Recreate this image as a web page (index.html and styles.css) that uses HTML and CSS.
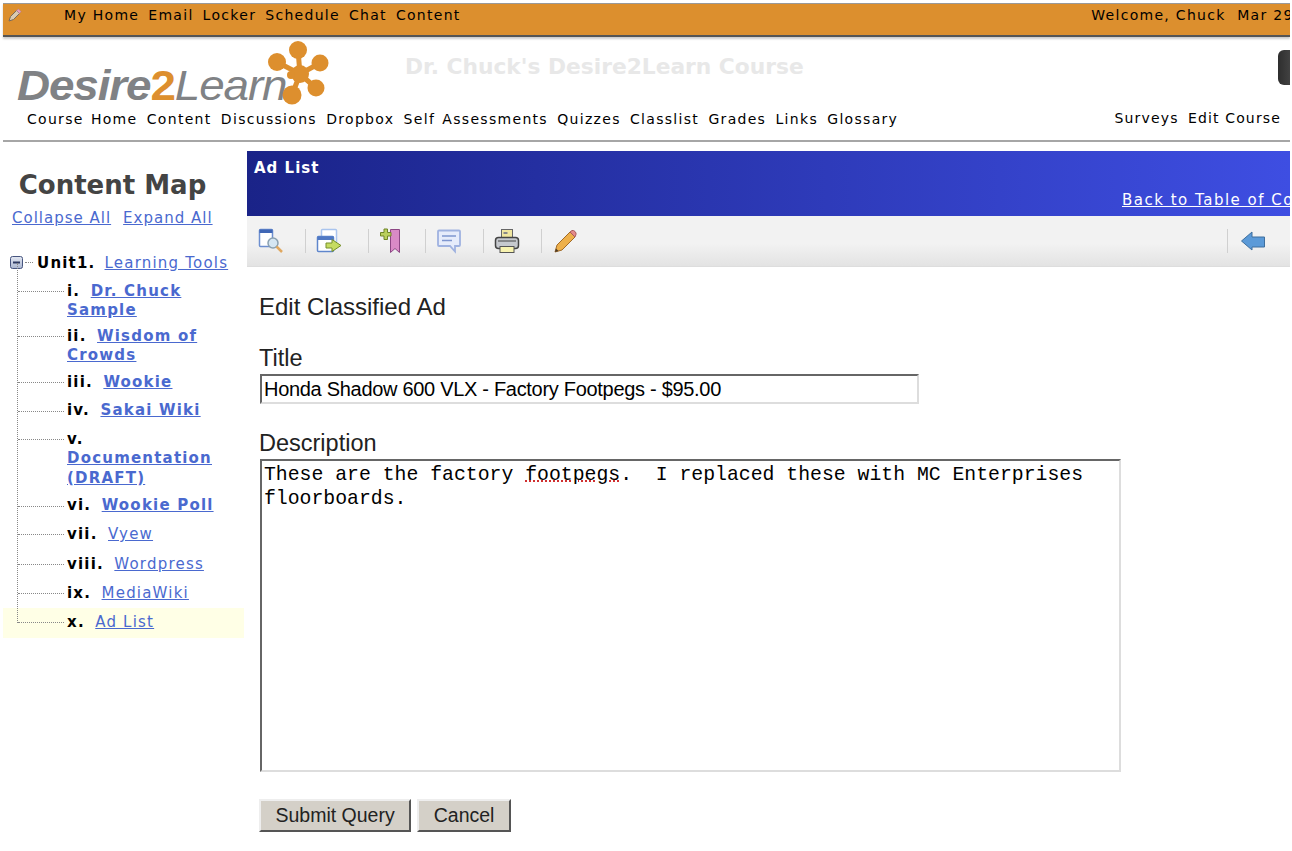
FILE: index.html
```html
<!DOCTYPE html>
<html lang="en">

<head>
    <meta charset="UTF-8">
    <meta name="viewport" content="width=device-width, initial-scale=1.0">
    <title>Edit Classified Ad</title>
    <link rel="stylesheet" href="styles.css">
</head>

<body>
    <div class="topbar">
        <svg class="topbar-icon" width="14" height="14" viewBox="0 0 14 14">
            <path d="M1 13 L2.500 8.500 L8.500 2.500 L11.500 5.500 L5.500 11.500 Z" fill="#d9c9b0" stroke="#7a6a5a"/>
            <path d="M8.500 2.500 L10.500 1 L13 3.500 L11.500 5.500 Z" fill="#e8a0c0" stroke="#a87a90" stroke-width="0.500"/>
        </svg>
        <nav class="topbar-links">
            <a>My Home</a><a>Email</a><a>Locker</a><a>Schedule</a><a>Chat</a><a>Content</a>
        </nav>
        <div class="topbar-user">Welcome, Chuck &nbsp;Mar 29, 2007</div>
    </div>

    <header class="course-header">
        <div class="brand-row">
            <div class="logo">
                <span class="logo-word"><b>Desire</b><b class="logo-two">2</b><i>Learn</i></span>
                <svg class="logo-flower" width="62" height="66" viewBox="0 0 62 66">
                    <g stroke="#dd8f2e" stroke-width="5">
                        <path d="M32 34 L30 10 M32 34 L9 22 M32 34 L52 23 M32 34 L48 48 M32 34 L24 55"/>
                    </g>
                    <g fill="#dd8f2e">
                        <circle cx="30" cy="10" r="9"/>
                        <circle cx="9" cy="22" r="9"/>
                        <circle cx="52" cy="23" r="8.500"/>
                        <circle cx="48" cy="48" r="8.500"/>
                        <circle cx="24" cy="55" r="9.500"/>
                        <circle cx="32" cy="34" r="9"/>
                        <circle cx="23" cy="35" r="4"/>
                    </g>
                </svg>
            </div>
            <div class="course-title">Dr. Chuck's Desire2Learn Course</div>
            <div class="header-badge"></div>
        </div>
        <nav class="course-nav">
            <div class="course-nav-left">
                <a>Course Home</a><a>Content</a><a>Discussions</a><a>Dropbox</a><a>Self Assessments</a><a>Quizzes</a><a>Classlist</a><a>Grades</a><a>Links</a><a>Glossary</a>
            </div>
            <div class="course-nav-right">
                <a>Surveys</a><a>Edit Course</a>
            </div>
        </nav>
    </header>

    <div class="layout">
        <aside class="sidebar">
            <h2 class="map-title">Content Map</h2>
            <div class="map-actions">
                <a href="#">Collapse All</a><a href="#">Expand All</a>
            </div>

            <div class="unit">
                <svg class="unit-toggle" width="13" height="13" viewBox="0 0 13 13">
                    <defs>
                        <linearGradient id="toggleFill" x1="0" y1="0" x2="0" y2="1">
                            <stop offset="0" stop-color="#e4e8f2"/>
                            <stop offset="1" stop-color="#a9b5d0"/>
                        </linearGradient>
                    </defs>
                    <rect x="0.500" y="0.500" width="12" height="12" rx="2" fill="url(#toggleFill)" stroke="#47557f"/>
                    <rect x="3" y="5.500" width="7" height="2" fill="#2e3a63"/>
                </svg>
                <span class="unit-dots"></span>
                <strong>Unit1.</strong>
                <a href="#">Learning Tools</a>
            </div>

            <ul class="tree">
                <li class="tree-item"><strong>i.</strong> <a class="visited" href="#">Dr. Chuck Sample</a></li>
                <li class="tree-item"><strong>ii.</strong> <a class="visited" href="#">Wisdom of Crowds</a></li>
                <li class="tree-item"><strong>iii.</strong> <a class="visited" href="#">Wookie</a></li>
                <li class="tree-item"><strong>iv.</strong> <a class="visited" href="#">Sakai Wiki</a></li>
                <li class="tree-item"><strong>v.</strong> <a class="visited" href="#">Documentation (DRAFT)</a></li>
                <li class="tree-item"><strong>vi.</strong> <a class="visited" href="#">Wookie Poll</a></li>
                <li class="tree-item plain"><strong>vii.</strong> <a href="#">Vyew</a></li>
                <li class="tree-item plain"><strong>viii.</strong> <a href="#">Wordpress</a></li>
                <li class="tree-item plain"><strong>ix.</strong> <a href="#">MediaWiki</a></li>
                <li class="tree-item plain current"><strong>x.</strong> <a href="#">Ad List</a></li>
            </ul>
        </aside>

        <main class="content">
            <div class="banner">
                <div class="banner-title">Ad List</div>
                <a class="banner-back" href="#">Back to Table of Contents</a>
            </div>

            <div class="toolbar">
                <button class="tool">
                    <svg width="26" height="26" viewBox="0 0 26 26">
                        <rect x="1.500" y="1.500" width="13" height="17" rx="1" fill="#fff" stroke="#6d8fd0" stroke-width="1.500"/>
                        <rect x="1.500" y="1.500" width="13" height="3.500" fill="#3f66b5"/>
                        <circle cx="15" cy="15" r="5" fill="#d5e6f2" stroke="#8aa0b0" stroke-width="1.500"/>
                        <path d="M18.500 18.500 L24 24" stroke="#e0a860" stroke-width="2.500"/>
                    </svg>
                </button>
                <button class="tool tool-wide">
                    <svg width="26" height="26" viewBox="0 0 26 26">
                        <rect x="5.500" y="1.500" width="15" height="13" rx="1" fill="#fff" stroke="#a9c4ee" stroke-width="1.500"/>
                        <rect x="1.500" y="8.500" width="16" height="15" rx="1" fill="#fff" stroke="#5f86cc" stroke-width="1.500"/>
                        <rect x="1.500" y="8.500" width="16" height="3.500" fill="#4f78c4"/>
                        <path d="M10 15 H16 V11.500 L25 17.500 L16 23.500 V20 H10 Z" fill="#c6dc62" stroke="#76902c"/>
                    </svg>
                </button>
                <button class="tool">
                    <svg width="26" height="26" viewBox="0 0 26 26">
                        <path d="M12.500 1.500 H21.500 V24.500 L17 20.500 L12.500 24.500 Z" fill="#d98ac6" stroke="#8c4684"/>
                        <path d="M6 1 H9.500 V4.500 H13 V8 H9.500 V11.500 H6 V8 H2.500 V4.500 H6 Z" fill="#b9cf5c" stroke="#6f8526"/>
                    </svg>
                </button>
                <button class="tool">
                    <svg width="26" height="26" viewBox="0 0 26 26">
                        <path d="M3 2.500 H23 Q24 2.500 24 3.500 V17 Q24 18 23 18 H19 V23.500 L14 18 H3 Q2 18 2 17 V3.500 Q2 2.500 3 2.500 Z" fill="#e6ecfb" stroke="#9fb2e0" stroke-width="1.800"/>
                        <path d="M6 8 H20 M6 12.500 H16" stroke="#7f96cf" stroke-width="1.500"/>
                    </svg>
                </button>
                <button class="tool">
                    <svg width="26" height="26" viewBox="0 0 26 26">
                        <rect x="7.500" y="1.500" width="11" height="9" fill="#f0e6a0" stroke="#666"/>
                        <rect x="9.500" y="4" width="4" height="2" fill="#888"/>
                        <rect x="1.500" y="9.500" width="23" height="11" rx="3" fill="#c6c9ce" stroke="#444" stroke-width="1.500"/>
                        <rect x="6" y="18.500" width="14" height="6" fill="#f8f3b0" stroke="#555"/>
                        <path d="M4 13 H22" stroke="#444"/>
                    </svg>
                </button>
                <button class="tool tool-last">
                    <svg width="26" height="26" viewBox="0 0 26 26">
                        <path d="M3 24 L5 17 L18 4 L23 9 L10 22 Z" fill="#eeb04a" stroke="#a06a28"/>
                        <path d="M18 4 L20 2.500 Q21.500 2 23 3.500 Q24.500 5 24 6.500 L23 9 Z" fill="#e58a8a" stroke="#a85c5c"/>
                        <path d="M3 24 L4 20.500 L6.500 23 Z" fill="#4a3a2a"/>
                    </svg>
                </button>
                <button class="tool-back">
                    <svg width="24" height="20" viewBox="0 0 24 20">
                        <path d="M0.500 10 L11 1 V6 H23.500 V16 H11 V19 Z" fill="#5b9ad8" stroke="#3f6f9e"/>
                    </svg>
                </button>
            </div>

            <form class="ad-form">
                <h3 class="form-heading">Edit Classified Ad</h3>
                <label class="field-label" for="title">Title</label>
                <input class="title-input" type="text" id="title" name="title" value="Honda Shadow 600 VLX - Factory Footpegs - $95.00">

                <label class="field-label description-label" for="description">Description</label>
                <div class="description-box" id="description">These are the factory <span class="misspelt">footpegs</span>.  I replaced these with MC Enterprises floorboards.</div>

                <div class="form-buttons">
                    <input class="form-button" type="button" value="Submit Query">
                    <input class="form-button" type="button" value="Cancel">
                </div>
            </form>
        </main>
    </div>
</body>

</html>
```

FILE: styles.css
```css
html,
body {
    height: 100%;
}

body {
    margin: 0;
    overflow: hidden;
    width: 1290px;
    padding-top: 3px;
    padding-left: 3px;
    box-sizing: border-box;
    background: #fff;
    font-family: "DejaVu Sans", sans-serif;
    font-size: 14px;
    color: #000;
}

a {
    color: #4a69cf;
}

/* Top bar */
.topbar {
    display: flex;
    align-items: center;
    height: 31px;
    overflow: hidden;
    background: #dc8f2e;
    border-top: 1px solid #999;
    border-bottom: 2px solid #555;
    box-shadow: 0 2px 2px #ccc;
    letter-spacing: 1.3px;
    white-space: nowrap;
}

.topbar a,
.course-nav a {
    color: #000;
}

.topbar-icon {
    flex-shrink: 0;
    margin: -10px 0 0 5px;
}

.topbar-links {
    display: flex;
    gap: 9px;
    margin-left: 42px;
    margin-top: -10px;
}

.topbar-user {
    flex-shrink: 0;
    margin-left: auto;
    margin-right: -56px;
    margin-top: -10px;
}

/* Course header */
.course-header {
    border-bottom: 2px solid #a6a6a6;
}

.brand-row {
    display: flex;
    height: 74px;
}

.logo {
    position: relative;
    width: 327px;
    flex-shrink: 0;
}

.logo-word {
    position: absolute;
    left: 14px;
    top: 25px;
    font-family: "Liberation Sans", sans-serif;
    font-size: 42px;
    font-style: italic;
    letter-spacing: -1px;
    color: #808285;
    white-space: nowrap;
    transform: scaleX(1.09);
    transform-origin: left;
}

.logo-word i {
    font-weight: normal;
}

.logo-two {
    color: #dd8f2e;
    font-style: normal;
}

.logo-flower {
    position: absolute;
    left: 265px;
    top: 3px;
}

.course-title {
    margin: 17px 0 0 75px;
    font-size: 21.75px;
    font-weight: bold;
    color: #e8e8e8;
    white-space: nowrap;
}

.header-badge {
    width: 24px;
    height: 35px;
    margin: 13px -12px 0 auto;
    background: linear-gradient(to right, #2e2e2e, #555);
    border-radius: 6px;
}

.course-nav {
    display: flex;
    justify-content: space-between;
    height: 29px;
    padding-left: 24px;
    letter-spacing: 1.3px;
    white-space: nowrap;
}

.course-nav-left,
.course-nav-right {
    display: flex;
    gap: 9.3px;
}

.course-nav-left {
    word-spacing: 1.5px;
}

.course-nav-right {
    margin-top: -1px;
    padding-right: 9px;
    letter-spacing: 1.15px;
}

/* Main layout */
.layout {
    display: flex;
    margin-top: 9px;
}

.sidebar {
    width: 244px;
    flex-shrink: 0;
}

.map-title {
    margin: 19px 0 0;
    padding-right: 25px;
    font-size: 26px;
    font-weight: bold;
    color: #444;
    text-align: center;
    line-height: 30px;
}

.map-actions {
    display: flex;
    gap: 12px;
    margin-top: 9px;
    padding-left: 9px;
    font-size: 15px;
    letter-spacing: 1px;
}

.unit {
    display: flex;
    align-items: center;
    margin-top: 26px;
    padding-left: 7px;
    height: 19px;
    font-size: 15px;
    letter-spacing: 1.2px;
}

.unit-dots {
    width: 8px;
    margin-left: 2px;
    border-top: 1px dotted #888;
}

.unit strong {
    margin: 0 9px 0 4px;
}

.tree {
    position: relative;
    list-style: none;
    margin: 5px 3px 0 0;
    padding: 0;
    font-size: 15px;
    letter-spacing: 1.2px;
}

/* the dotted trunk of the tree */
.tree::before {
    content: "";
    position: absolute;
    z-index: 1;
    left: 14px;
    top: -14px;
    bottom: 15px;
    border-left: 1px dotted #888;
}

.tree-item {
    position: relative;
    padding: 4.5px 27px 4.5px 64px;
    line-height: 19.5px;
    font-weight: bold;
}

.tree-item:nth-child(1) {
    padding-bottom: 1.5px;
}

.tree-item:nth-child(2) {
    padding-bottom: 2.5px;
}

.tree-item:nth-child(5) {
    padding-bottom: 3.5px;
}

.tree-item.plain {
    padding-top: 5px;
    padding-bottom: 5px;
}

.tree-item.plain a {
    font-weight: normal;
}

.tree-item strong {
    margin-right: 4px;
}

.tree-item::before {
    content: "";
    position: absolute;
    left: 15px;
    top: 14px;
    width: 46px;
    border-top: 1px dotted #888;
}

.tree-item.current {
    margin-top: -1px;
    padding-bottom: 6px;
    background: #ffffe6;
}

.visited {
    font-weight: bold;
}

/* Content */
.content {
    flex: 1;
    min-width: 0;
}

.banner {
    display: flex;
    flex-direction: column;
    justify-content: space-between;
    height: 65px;
    box-sizing: border-box;
    padding: 8px 0 7px 7px;
    overflow: hidden;
    background: linear-gradient(to right, #1a2388, #3e4ee2);
    color: #fff;
}

.banner-title {
    font-size: 15px;
    font-weight: bold;
    letter-spacing: 1px;
}

.banner-back {
    align-self: flex-start;
    margin-left: 868px;
    color: #fff;
    font-size: 15px;
    letter-spacing: 1.5px;
    white-space: nowrap;
}

.toolbar {
    display: flex;
    align-items: center;
    height: 51px;
    box-sizing: border-box;
    padding-left: 11px;
    background: linear-gradient(to bottom, #f2f2f2 55%, #e3e3e3);
    border-bottom: 1px solid #ddd;
}

.tool,
.tool-back {
    display: flex;
    align-items: center;
    padding: 0;
    background: none;
    border: 0;
}

.tool {
    position: relative;
    height: 26px;
    margin-right: 32px;
}

.tool-wide {
    margin-right: 36px;
}

/* separator to the right of each icon */
.tool::after {
    content: "";
    position: absolute;
    left: 47px;
    top: 1px;
    height: 24px;
    border-left: 1px solid #d0d0d0;
}

.tool-wide::after {
    left: 52px;
}

.tool-last::after {
    display: none;
}

.tool-back {
    height: 24px;
    margin-left: auto;
    margin-right: 25px;
    padding-left: 13px;
    border-left: 1px solid #d0d0d0;
}

/* Form */
.ad-form {
    display: flex;
    flex-direction: column;
    align-items: flex-start;
    padding: 27px 0 0 12px;
    font-family: "Liberation Sans", sans-serif;
}

.form-heading {
    margin: 0;
    font-size: 24px;
    font-weight: normal;
    line-height: 26px;
    color: #222;
}

.field-label {
    margin-top: 25px;
    font-size: 23.5px;
    line-height: 26px;
    color: #222;
}

.description-label {
    margin-top: 26px;
}

.title-input {
    width: 659px;
    height: 30px;
    box-sizing: border-box;
    margin: 3px 0 0 1px;
    padding: 0 3px 0 2px;
    font-family: "Liberation Sans", sans-serif;
    font-size: 20px;
    letter-spacing: -0.3px;
    color: #000;
    border: 2px solid;
    border-color: #666 #ddd #ddd #666;
}

.description-box {
    width: 861px;
    height: 313px;
    box-sizing: border-box;
    margin: 3px 0 0 1px;
    padding: 3px 2px;
    font-family: "Liberation Mono", monospace;
    font-size: 19.8px;
    line-height: 23.5px;
    white-space: pre-wrap;
    border: 2px solid;
    border-color: #666 #ddd #ddd #666;
}

.misspelt {
    text-decoration: underline dotted #d03030;
}

.form-buttons {
    display: flex;
    gap: 6px;
    margin-top: 27px;
}

.form-button {
    height: 33px;
    padding: 0 14.5px;
    font-family: "Liberation Sans", sans-serif;
    font-size: 19.5px;
    color: #222;
    background: #d4d0c8;
    border: 2px solid;
    border-color: #eee #555 #555 #eee;
}
```
